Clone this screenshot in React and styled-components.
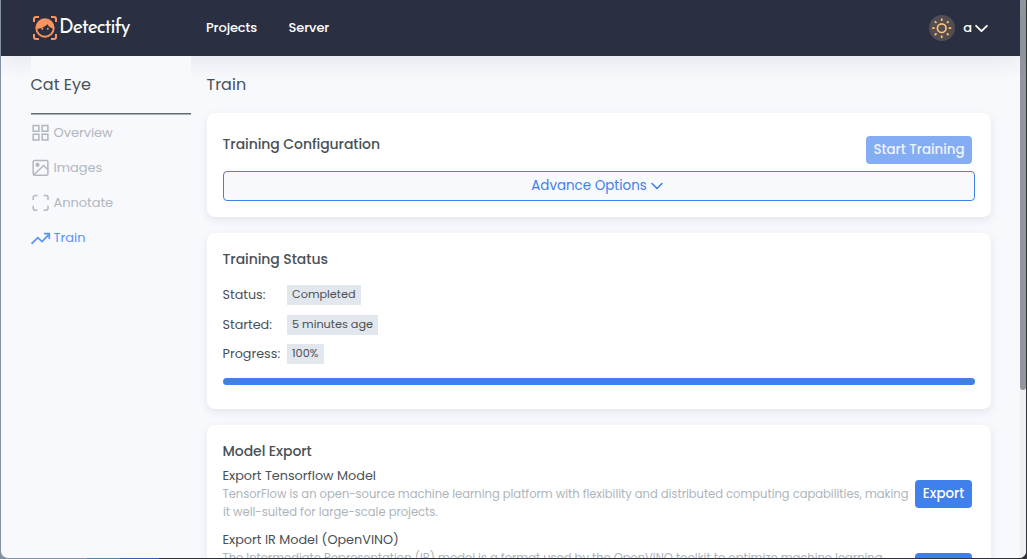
import React from "react";
import styled, { createGlobalStyle } from "styled-components";

const GlobalStyle = createGlobalStyle`
  *, *::before, *::after { box-sizing: border-box; }
  html, body { margin: 0; padding: 0; overflow: hidden; }
  body { font-family: Poppins, Inter, "Liberation Sans", sans-serif; color: #495057; }
  button { font-family: inherit; border: 0; margin: 0; }
  h1, h2, h3, p { margin: 0; font-weight: 400; }
`;

const Desktop = styled.div`
  width: 1027px;
  height: 559px;
  padding: 0 1px 1px;
  background: linear-gradient(90deg, #8291a3 0 87px, #4a87a3 87px 120px, #2b64b4 120px 159px, #2e3136 159px);
`;

const Window = styled.div`
  display: flex;
  height: 558px;
  overflow: hidden;
  border-radius: 0 0 7px 7px;
  background: #f8f9fd;
`;

const Page = styled.div`
  flex: 1;
  min-width: 0;
  display: flex;
  flex-direction: column;
`;

const ScrollTrack = styled.div`
  width: 6px;
  background: #f0f0f1;
`;

const ScrollThumb = styled.div`
  height: 390px;
  border-radius: 0 0 3px 3px;
  background: #9196a0;
`;

const Header = styled.header`
  position: relative;
  z-index: 1;
  flex: none;
  height: 56px;
  display: flex;
  align-items: center;
  padding: 0 32px;
  background: #2a3042;
  color: #fff;
  box-shadow: 0 8px 20px rgba(50, 54, 66, 0.08);
`;

const Brand = styled.div`
  display: flex;
  align-items: center;
  gap: 2px;
  width: 173px;
`;

const BrandName = styled.span`
  font-family: "Josefin Sans", Lato, sans-serif;
  font-size: 19.5px;
  line-height: 24px;
  letter-spacing: -1.05px;
`;

const Nav = styled.nav`
  display: flex;
  gap: 31.5px;
  flex: 1;
`;

const NavLink = styled.span`
  font-size: 13px;
  line-height: 20px;
  font-weight: 500;
  letter-spacing: -0.12px;
`;

const ThemeToggle = styled.span`
  display: flex;
  width: 26px;
  height: 26px;
  border-radius: 50%;
  background: #544d50;
`;

const UserMenu = styled.span`
  display: flex;
  align-items: center;
  gap: 3px;
  margin-left: 8px;
  font-size: 13px;
  font-weight: 500;
`;

const Columns = styled.div`
  flex: 1;
  min-height: 0;
  display: flex;
  gap: 16px;
  padding: 0 29px 0 30px;
`;

const Sidebar = styled.aside`
  position: relative;
  z-index: 2;
  width: 160px;
  background: #f8f9fd;
`;

const ProjectTitle = styled.h1`
  height: 58px;
  padding-top: 16px;
  margin-bottom: 1px;
  border-bottom: 1px solid #646b72;
  box-shadow: 0 1px 0 #a9b1b9;
  font-size: 16px;
  line-height: 25px;
  text-indent: -0.5px;
`;

const SideItem = styled.div`
  display: flex;
  align-items: center;
  gap: 2.5px;
  height: 35px;
  font-size: 13px;
  color: ${(p) => (p.$active ? "#5a93f0" : "#b0b7be")};
  letter-spacing: -0.05px;
`;

const Main = styled.main`
  flex: 1;
  min-width: 0;
  display: flex;
  flex-direction: column;
  gap: 16px;
`;

const PageTitle = styled.h1`
  height: 41px;
  padding-top: 16px;
  font-size: 16px;
  line-height: 25px;
  text-indent: -0.5px;
`;

const Card = styled.section`
  flex: none;
  height: ${(p) => p.$height}px;
  padding: 16px;
  border-radius: 8px;
  background: #fff;
  box-shadow: 0 3px 8px rgba(40, 48, 66, 0.1);
`;

const CardTitle = styled.h2`
  font-size: 14px;
  line-height: 20px;
  font-weight: 500;
  letter-spacing: -0.07px;
  text-indent: -0.5px;
`;

const ConfigRow = styled.div`
  display: flex;
  justify-content: space-between;
  height: 42px;
  padding: 5px 3px 0 0;
`;

const Button = styled.button`
  flex: none;
  width: ${(p) => p.$width}px;
  height: 28px;
  margin-top: ${(p) => p.$top || 0}px;
  padding: 0 0 1px;
  border-radius: 4px;
  background: ${(p) => (p.$muted ? "#84adf3" : "#3f80ea")};
  color: ${(p) => (p.$muted ? "#eef4fe" : "#fff")};
  font-size: 13.4px;
  font-weight: 500;
  white-space: nowrap;
`;

const AdvancedToggle = styled.div`
  display: flex;
  align-items: center;
  justify-content: center;
  gap: 4px;
  height: 30px;
  padding-right: 4px;
  border: 1px solid #3f80ea;
  border-radius: 4px;
  background: #f8f9fd;
  color: #3f80ea;
  font-size: 13.45px;
`;

const StatusList = styled.div`
  display: flex;
  flex-direction: column;
  padding: 11.5px 0 9px;
`;

const StatusRow = styled.div`
  display: flex;
  align-items: center;
  height: 29.5px;
`;

const StatusLabel = styled.span`
  width: 64px;
  font-size: 12.75px;
  text-indent: -0.5px;
`;

const Tag = styled.span`
  width: ${(p) => p.$width}px;
  height: 20px;
  padding-left: 5px;
  background: #e2e7ee;
  font-size: 11.25px;
  line-height: 19px;
  white-space: nowrap;
`;

const ProgressTrack = styled.div`
  height: 7px;
  border-radius: 4px;
  background: #e2e7ee;
  overflow: hidden;
`;

const ProgressFill = styled.div`
  height: 100%;
  background: #3f80ea;
`;

const ExportItem = styled.div`
  display: flex;
  align-items: center;
  gap: 4px;
  margin-bottom: 10px;
  padding-right: 3px;
`;

const ExportBody = styled.div`
  width: 688px;
`;

const ExportName = styled.h3`
  font-size: 12.8px;
  line-height: 18px;
  text-indent: -0.5px;
`;

const ExportText = styled.p`
  font-size: 11.52px;
  line-height: 18px;
  color: #adb4bb;
  white-space: nowrap;
  text-indent: -0.5px;
`;

const ExportList = styled.div`
  padding-top: 6px;
`;

const BrandIcon = () => (
  <svg width="24" height="24" viewBox="0 0 24 24" fill="none">
    <path d="M1 6V3a2 2 0 0 1 2-2h3M18 1h3a2 2 0 0 1 2 2v3M23 18v3a2 2 0 0 1-2 2h-3M6 23H3a2 2 0 0 1-2-2v-3" stroke="#fd9460" strokeWidth="2" />
    <circle cx="12" cy="12" r="8.700" stroke="#fd9460" strokeWidth="1.900" />
    <path d="M3.300 13C3 7 7 3 12 3s9 4 8.700 9.500C17.500 12 15.500 10.500 14.400 8.300 12 11 8 12.800 3.300 13Z" fill="#fd9460" />
    <circle cx="9.300" cy="12.800" r="1" fill="#fd9460" />
    <circle cx="14.800" cy="12.800" r="1" fill="#fd9460" />
  </svg>
);

const SunIcon = () => (
  <svg width="26" height="26" viewBox="0 0 26 26" fill="none" stroke="#fcc478" strokeWidth="1.700">
    <circle cx="12.700" cy="13.200" r="4.300" />
    <path d="M12.700 3.500v2.500M12.700 20.500v2.500M3.200 13.200h2.500M19.700 13.200h2.500M5.800 6.300l1.700 1.700M17.900 18.400l1.700 1.700M5.800 20.100l1.700-1.700M17.900 8l1.700-1.700" />
  </svg>
);

const Chevron = ({ width, height, stroke }) => (
  <svg width={width} height={height} viewBox="0 0 12 8" fill="none">
    <path d="M1 1.500l5 5 5-5" stroke="currentColor" strokeWidth={stroke} strokeLinecap="round" strokeLinejoin="round" />
  </svg>
);

const SideIcon = ({ children }) => (
  <svg width="20" height="20" viewBox="0 0 20 20" fill="none" stroke="currentColor" strokeWidth="1.500">
    {children}
  </svg>
);

export default function App() {
  return (
    <Desktop>
      <GlobalStyle />
      <Window>
        <Page>
          <Header>
            <Brand>
              <BrandIcon />
              <BrandName>Detectify</BrandName>
            </Brand>
            <Nav>
              <NavLink>Projects</NavLink>
              <NavLink>Server</NavLink>
            </Nav>
            <ThemeToggle><SunIcon /></ThemeToggle>
            <UserMenu>
              a
              <Chevron width={13} height={9} stroke={1.7} />
            </UserMenu>
          </Header>
          <Columns>
            <Sidebar>
              <ProjectTitle>Cat Eye</ProjectTitle>
              <SideItem>
                <SideIcon>
                  <path d="M2.200 2.500h5.700v5.700H2.200zM11.200 2.500h5.700v5.700h-5.700zM2.200 11.300h5.700v5.700H2.200zM11.200 11.300h5.700v5.700h-5.700z" />
                </SideIcon>
                Overview
              </SideItem>
              <SideItem>
                <SideIcon>
                  <rect x="2.200" y="2.500" width="14.700" height="14.700" rx="1.300" />
                  <circle cx="6.500" cy="6.900" r="1.300" fill="currentColor" />
                  <path d="M3 16.800l9.600-9.300 4.300 4.300" />
                </SideIcon>
                Images
              </SideItem>
              <SideItem>
                <SideIcon>
                  <path d="M2.200 7V4.500a2 2 0 0 1 2-2h2.300M12.700 2.500H15a2 2 0 0 1 2 2V7M17 12.800v2.500a2 2 0 0 1-2 2h-2.300M6.500 17.300H4.200a2 2 0 0 1-2-2v-2.500" />
                </SideIcon>
                Annotate
              </SideItem>
              <SideItem $active>
                <SideIcon>
                  <path d="M0.500 15.800l6.300-6.200 4.200 4 7-7.300M13 5.700h5.300v5.300" strokeWidth="1.700" />
                </SideIcon>
                Train
              </SideItem>
            </Sidebar>
            <Main>
              <PageTitle>Train</PageTitle>
              <Card $height={104}>
                <ConfigRow>
                  <CardTitle>Training Configuration</CardTitle>
                  <Button $width={106} $top={2} $muted>Start Training</Button>
                </ConfigRow>
                <AdvancedToggle>
                  Advance Options
                  <Chevron width={12} height={8} stroke={1.6} />
                </AdvancedToggle>
              </Card>
              <Card $height={176}>
                <CardTitle>Training Status</CardTitle>
                <StatusList>
                  <StatusRow>
                    <StatusLabel>Status:</StatusLabel>
                    <Tag $width={74}>Completed</Tag>
                  </StatusRow>
                  <StatusRow>
                    <StatusLabel>Started:</StatusLabel>
                    <Tag $width={91}>5 minutes age</Tag>
                  </StatusRow>
                  <StatusRow>
                    <StatusLabel>Progress:</StatusLabel>
                    <Tag $width={37}>100%</Tag>
                  </StatusRow>
                </StatusList>
                <ProgressTrack>
                  <ProgressFill style={{ width: "100%" }} />
                </ProgressTrack>
              </Card>
              <Card $height={320}>
                <CardTitle>Model Export</CardTitle>
                <ExportList>
                  <ExportItem>
                    <ExportBody>
                      <ExportName>Export Tensorflow Model</ExportName>
                      <ExportText>
                        TensorFlow is an open-source machine learning platform with flexibility and distributed computing capabilities, making
                        <br />
                        it well-suited for large-scale projects.
                      </ExportText>
                    </ExportBody>
                    <Button $width={57}>Export</Button>
                  </ExportItem>
                  <ExportItem>
                    <ExportBody>
                      <ExportName>Export IR Model (OpenVINO)</ExportName>
                      <ExportText>
                        The Intermediate Representation (IR) model is a format used by the OpenVINO toolkit to optimize machine learning
                        <br />
                        models for deployment on a wide range of hardware, reducing size
                        <br />
                        and improving inference speed.
                      </ExportText>
                    </ExportBody>
                    <Button $width={57}>Export</Button>
                  </ExportItem>
                </ExportList>
              </Card>
            </Main>
          </Columns>
        </Page>
        <ScrollTrack>
          <ScrollThumb />
        </ScrollTrack>
      </Window>
    </Desktop>
  );
}
